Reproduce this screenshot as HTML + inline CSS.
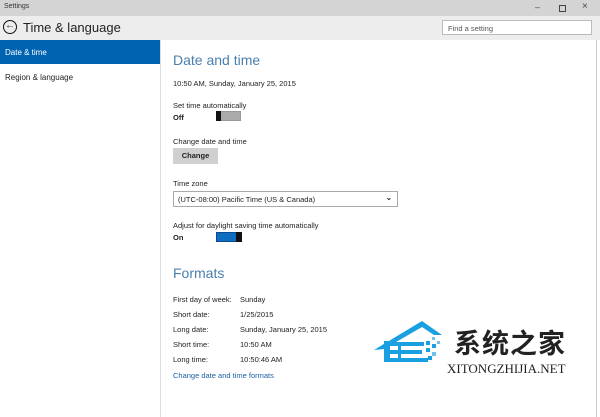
<!DOCTYPE html>
<html><head><meta charset="utf-8"><style>
*{margin:0;padding:0;box-sizing:border-box}
body{width:600px;height:417px;overflow:hidden;background:#fff;font-family:"Liberation Sans","Noto Sans CJK SC",sans-serif;position:relative;color:#222}
.a{position:absolute;white-space:nowrap}
.s{font-size:8px}
</style></head><body>
<div class="a" style="left:0;top:0;width:600px;height:16px;background:#d4d4d4"></div>
<div class="a s" style="left:4px;top:3px;font-size:7px;color:#333">Settings</div>
<div class="a" style="left:535px;top:2px;font-size:9px;color:#444">–</div>
<div class="a" style="left:559px;top:5px;width:7px;height:7px;border:1px solid #444"></div>
<div class="a" style="left:582px;top:1px;font-size:10px;color:#444">×</div>
<div class="a" style="left:0;top:16px;width:600px;height:24px;background:#ededed"></div>
<div class="a" style="left:3px;top:20px;width:14px;height:14px;border:1.5px solid #111;border-radius:50%;font-size:10px;line-height:10px;text-align:center;font-weight:bold">←</div>
<div class="a" style="left:23px;top:20px;font-size:13px;color:#222">Time &amp; language</div>
<div class="a" style="left:442px;top:20px;width:150px;height:15px;background:#fff;border:1px solid #bbb;font-size:7.5px;color:#555;padding:3px 0 0 5px">Find a setting</div>
<div class="a" style="left:0;top:40px;width:160px;height:24px;background:#0063b1"></div>
<div class="a s" style="left:5px;top:48px;color:#fff">Date &amp; time</div>
<div class="a s" style="left:5px;top:73px;color:#222">Region &amp; language</div>
<div class="a" style="left:160px;top:40px;width:1px;height:377px;background:#ddd"></div>
<div class="a" style="left:596px;top:40px;width:1px;height:377px;background:#ccc"></div>
<div class="a" style="left:173px;top:52px;font-size:14px;color:#4a7fae">Date and time</div>
<div class="a s" style="left:173px;top:79px;font-size:7.5px">10:50 AM, Sunday, January 25, 2015</div>
<div class="a s" style="left:173px;top:101px;font-size:7.5px">Set time automatically</div>
<div class="a s" style="left:173px;top:113px;font-weight:bold;font-size:7.5px">Off</div>
<div class="a" style="left:216px;top:111px;width:25px;height:10px;background:#aaa;border:1px solid #999"></div>
<div class="a" style="left:216px;top:111px;width:5px;height:10px;background:#111"></div>
<div class="a s" style="left:173px;top:137px;font-size:7.5px">Change date and time</div>
<div class="a" style="left:173px;top:148px;width:45px;height:16px;background:#d0d0d0;font-size:7.5px;font-weight:bold;text-align:center;line-height:16px">Change</div>
<div class="a s" style="left:173px;top:179px;font-size:7.5px">Time zone</div>
<div class="a" style="left:173px;top:191px;width:225px;height:16px;border:1px solid #aaa;font-size:7.5px;padding:3px 0 0 4px">(UTC-08:00) Pacific Time (US &amp; Canada)<span style="position:absolute;right:5px;top:1px;font-weight:bold">⌄</span></div>
<div class="a s" style="left:173px;top:221px;font-size:7.5px">Adjust for daylight saving time automatically</div>
<div class="a s" style="left:173px;top:233px;font-weight:bold;font-size:7.5px">On</div>
<div class="a" style="left:216px;top:232px;width:25px;height:10px;background:#0f6cc0;border:1px solid #0a4a90"></div>
<div class="a" style="left:236px;top:232px;width:6px;height:10px;background:#111"></div>
<div class="a" style="left:173px;top:265px;font-size:14px;color:#4a7fae">Formats</div>
<div class="a" style="left:173px;top:292px;font-size:7.5px;line-height:15px">First day of week:<br>Short date:<br>Long date:<br>Short time:<br>Long time:</div>
<div class="a" style="left:240px;top:292px;font-size:7.5px;line-height:15px">Sunday<br>1/25/2015<br>Sunday, January 25, 2015<br>10:50 AM<br>10:50:46 AM</div>
<div class="a" style="left:173px;top:371px;font-size:7.5px;color:#1a5fa8">Change date and time formats</div>
<svg class="a" style="left:370px;top:315px" width="85" height="50" viewBox="0 0 85 50">
<path d="M4 35 L52 6 L72 20 L64 20 L52 12 L14 34 Z" fill="#1aa0e0"/>
<rect x="14" y="26" width="6" height="21" fill="#1aa0e0"/>
<rect x="20" y="27" width="34" height="4" fill="#1aa0e0"/>
<rect x="20" y="35" width="32" height="4" fill="#1aa0e0"/>
<rect x="20" y="43" width="38" height="4" fill="#1aa0e0"/>
<rect x="28" y="31" width="3" height="12" fill="#1aa0e0"/>
<rect x="56" y="26" width="4" height="4" fill="#1aa0e0"/>
<rect x="62" y="22" width="3" height="3" fill="#6cc4ee"/>
<rect x="62" y="29" width="4" height="4" fill="#1aa0e0"/>
<rect x="56" y="33" width="4" height="4" fill="#1aa0e0"/>
<rect x="67" y="26" width="3" height="3" fill="#6cc4ee"/>
<rect x="62" y="37" width="4" height="4" fill="#6cc4ee"/>
<rect x="58" y="41" width="4" height="4" fill="#1aa0e0"/>
</svg>
<div class="a" style="left:454px;top:329px;font-size:27px;line-height:30px;font-weight:bold;color:#222;letter-spacing:1px">系统之家</div>
<div class="a" style="left:447px;top:361px;font-family:'Liberation Serif',serif;font-size:13px;color:#222">XITONGZHIJIA.NET</div>
</body></html>
